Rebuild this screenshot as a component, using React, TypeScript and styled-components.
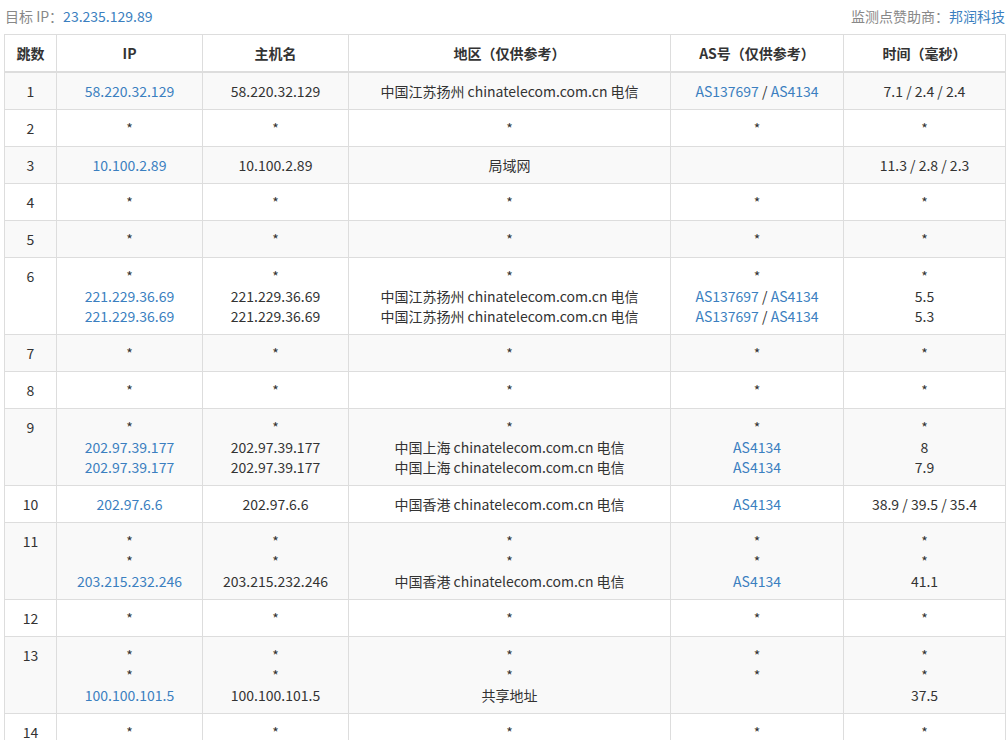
import * as React from "react";
import styled, { createGlobalStyle } from "styled-components";

const Global = createGlobalStyle`
	body {
		margin: 0;
		background: #fff;
		font-family: "Noto Sans CJK SC", "Noto Sans", sans-serif;
		font-size: 14px;
		color: #333;
	}
`;

type Cell = string | string[];
interface Hop {
	n: number;
	ip: string[];
	host: string[];
	geo: string[];
	as: string[];
	time: string[];
}

const loc1 = "中国江苏扬州 chinatelecom.com.cn 电信";
const as1 = "AS137697 / AS4134";
const sh = "中国上海 chinatelecom.com.cn 电信";
const hk = "中国香港 chinatelecom.com.cn 电信";

const star = (): Hop["ip"] => ["*"];
const starHop = (n: number): Hop => ({ n, ip: star(), host: star(), geo: star(), as: star(), time: star() });

const hops: Hop[] = [
	{ n: 1, ip: ["58.220.32.129"], host: ["58.220.32.129"], geo: [loc1], as: [as1], time: ["7.1 / 2.4 / 2.4"] },
	starHop(2),
	{ n: 3, ip: ["10.100.2.89"], host: ["10.100.2.89"], geo: ["局域网"], as: [""], time: ["11.3 / 2.8 / 2.3"] },
	starHop(4),
	starHop(5),
	{
		n: 6,
		ip: ["*", "221.229.36.69", "221.229.36.69"],
		host: ["*", "221.229.36.69", "221.229.36.69"],
		geo: ["*", loc1, loc1],
		as: ["*", as1, as1],
		time: ["*", "5.5", "5.3"],
	},
	starHop(7),
	starHop(8),
	{
		n: 9,
		ip: ["*", "202.97.39.177", "202.97.39.177"],
		host: ["*", "202.97.39.177", "202.97.39.177"],
		geo: ["*", sh, sh],
		as: ["*", "AS4134", "AS4134"],
		time: ["*", "8", "7.9"],
	},
	{ n: 10, ip: ["202.97.6.6"], host: ["202.97.6.6"], geo: [hk], as: ["AS4134"], time: ["38.9 / 39.5 / 35.4"] },
	{
		n: 11,
		ip: ["*", "*", "203.215.232.246"],
		host: ["*", "*", "203.215.232.246"],
		geo: ["*", "*", hk],
		as: ["*", "*", "AS4134"],
		time: ["*", "*", "41.1"],
	},
	starHop(12),
	{
		n: 13,
		ip: ["*", "*", "100.100.101.5"],
		host: ["*", "*", "100.100.101.5"],
		geo: ["*", "*", "共享地址"],
		as: ["*", "*", ""],
		time: ["*", "*", "37.5"],
	},
	starHop(14),
];

const Page = styled.div`
	padding: 0 2px 0 4px;
`;

const TopBar = styled.div`
	display: flex;
	justify-content: space-between;
	align-items: center;
	height: 32px;
	padding: 0 0 2px 1px;
	color: #888;
`;

const Link = styled.span`
	color: #3b7fc0;
`;

const Table = styled.table`
	width: 100%;
	border-collapse: collapse;
	table-layout: fixed;
`;

const Th = styled.th`
	border: 1px solid #ddd;
	border-bottom: 2px solid #ddd;
	padding: 8px;
	line-height: 20px;
	font-weight: bold;
	color: #333;
	text-align: center;
`;

const Tr = styled.tr<{ $odd: boolean }>`
	background: ${(p) => (p.$odd ? "#f9f9f9" : "#fff")};
`;

const Td = styled.td`
	border: 1px solid #ddd;
	padding: 8px;
	line-height: 20px;
	text-align: center;
	vertical-align: top;
	white-space: nowrap;
`;

const Line = styled.div<{ $link?: boolean }>`
	height: 20px;
	color: ${(p) => (p.$link ? "#3b7fc0" : "#333")};
`;

function AsLine({ text }: { text: string }) {
	if (text === "*" || text === "") return <Line>{text}</Line>;
	const parts = text.split(" / ");
	return (
		<Line>
			{parts.map((p, i) => (
				<React.Fragment key={i}>
					{i > 0 && " / "}
					<Link>{p}</Link>
				</React.Fragment>
			))}
		</Line>
	);
}

function Lines({ items, link }: { items: Cell; link?: boolean }) {
	const arr = Array.isArray(items) ? items : [items];
	return (
		<>
			{arr.map((t, i) => (
				<Line key={i} $link={link && t !== "*"}>
					{t}
				</Line>
			))}
		</>
	);
}

export default function App() {
	return (
		<Page>
			<Global />
			<TopBar>
				<span>
					目标 IP：<Link>23.235.129.89</Link>
				</span>
				<span>
					监测点赞助商：<Link>邦润科技</Link>
				</span>
			</TopBar>
			<Table>
				<colgroup>
					<col style={{ width: 52 }} />
					<col style={{ width: 146 }} />
					<col style={{ width: 146 }} />
					<col style={{ width: 322 }} />
					<col style={{ width: 173 }} />
					<col style={{ width: 162 }} />
				</colgroup>
				<thead>
					<tr>
						<Th>跳数</Th>
						<Th>IP</Th>
						<Th>主机名</Th>
						<Th>地区（仅供参考）</Th>
						<Th>AS号（仅供参考）</Th>
						<Th>时间（毫秒）</Th>
					</tr>
				</thead>
				<tbody>
					{hops.map((h, i) => (
						<Tr key={h.n} $odd={i % 2 === 0}>
							<Td>{h.n}</Td>
							<Td>
								<Lines items={h.ip} link />
							</Td>
							<Td>
								<Lines items={h.host} />
							</Td>
							<Td>
								<Lines items={h.geo} />
							</Td>
							<Td>
								{h.as.map((a, k) => (
									<AsLine key={k} text={a} />
								))}
							</Td>
							<Td>
								<Lines items={h.time} />
							</Td>
						</Tr>
					))}
				</tbody>
			</Table>
		</Page>
	);
}
